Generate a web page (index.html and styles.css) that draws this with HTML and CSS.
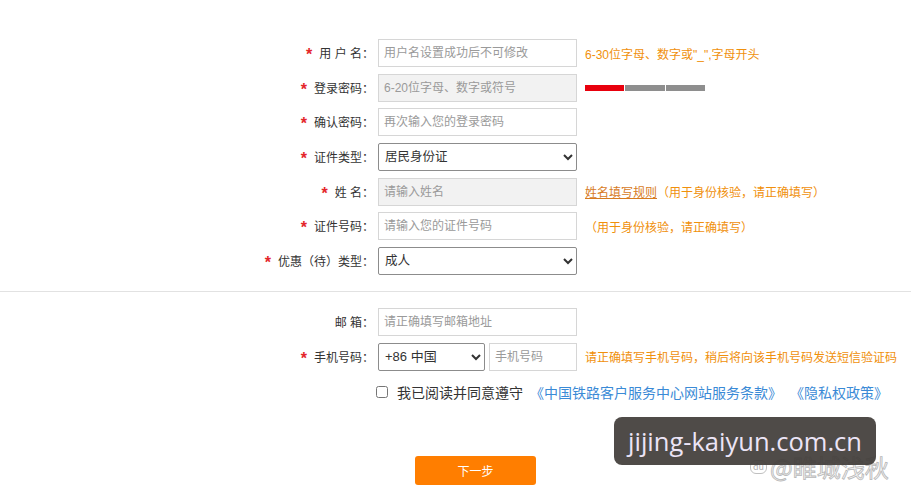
FILE: index.html
```html
<!DOCTYPE html>
<html lang="zh-CN">
<head>
<meta charset="utf-8">
<title>注册</title>
<link rel="stylesheet" href="styles.css">
</head>
<body>
<div class="page">
  <form class="reg">
    <div class="group">
      <div class="row">
        <label class="label"><em class="req">*</em>用 户 名：</label>
        <input class="field" type="text" placeholder="用户名设置成功后不可修改">
        <span class="hint">6-30位字母、数字或"_",字母开头</span>
      </div>
      <div class="row">
        <label class="label"><em class="req">*</em>登录密码：</label>
        <input class="field filled" type="text" placeholder="6-20位字母、数字或符号">
        <span class="strength"><i class="weak"></i><i></i><i></i></span>
      </div>
      <div class="row">
        <label class="label"><em class="req">*</em>确认密码：</label>
        <input class="field" type="text" placeholder="再次输入您的登录密码">
      </div>
      <div class="row">
        <label class="label"><em class="req">*</em>证件类型：</label>
        <select class="field sel"><option>居民身份证</option></select>
      </div>
      <div class="row">
        <label class="label"><em class="req">*</em>姓 名：</label>
        <input class="field filled" type="text" placeholder="请输入姓名">
        <span class="hint"><a class="rule">姓名填写规则</a>（用于身份核验，请正确填写）</span>
      </div>
      <div class="row">
        <label class="label"><em class="req">*</em>证件号码：</label>
        <input class="field" type="text" placeholder="请输入您的证件号码">
        <span class="hint">（用于身份核验，请正确填写）</span>
      </div>
      <div class="row">
        <label class="label"><em class="req">*</em>优惠（待）类型：</label>
        <select class="field sel"><option>成人</option></select>
      </div>
    </div>
    <div class="sep"></div>
    <div class="group">
      <div class="row">
        <label class="label">邮 箱：</label>
        <input class="field" type="text" placeholder="请正确填写邮箱地址">
      </div>
      <div class="row">
        <label class="label"><em class="req">*</em>手机号码：</label>
        <div class="phone">
          <select class="sel code"><option>+86 中国</option></select>
          <input class="num" type="text" placeholder="手机号码">
        </div>
        <span class="hint">请正确填写手机号码，稍后将向该手机号码发送短信验证码</span>
      </div>
    </div>
    <div class="agree">
      <input class="chk" type="checkbox">
      <span class="agree-text">我已阅读并同意遵守</span>
      <a class="link">《中国铁路客户服务中心网站服务条款》</a>
      <a class="link">《隐私权政策》</a>
    </div>
    <div class="actions">
      <button class="next" type="button">下一步</button>
    </div>
  </form>
  <div class="wm-sign"><span class="du">du</span>@睢城浅秋</div>
  <div class="wm-box">jijing-kaiyun.com.cn</div>
</div>
</body>
</html>
```
FILE: styles.css
```css
html, body {
  margin: 0;
  padding: 0;
  background: #fff;
}
body {
  font-family: "Liberation Sans", "Noto Sans CJK SC", sans-serif;
  font-size: 12px;
  color: #333;
  width: 911px;
  height: 500px;
  overflow: hidden;
}
.page {
  position: relative;
  padding-top: 39px;
  height: 461px;
}
.group {
  display: flex;
  flex-direction: column;
  gap: 6.67px;
}
.row {
  display: flex;
  align-items: center;
  height: 28px;
}
.label {
  width: 374px;
  flex: none;
  text-align: right;
  font-size: 12px;
  color: #333;
  margin-right: 4px;
  white-space: pre;
}
.req {
  font-style: normal;
  color: #e4262a;
  font-size: 16px;
  font-weight: bold;
  margin-right: 7px;
  position: relative;
  top: 2px;
}
.field {
  box-sizing: border-box;
  width: 199px;
  height: 28px;
  flex: none;
  border: 1px solid #d6d6d6;
  padding: 0 5px;
  font-family: inherit;
  font-size: 12px;
  color: #333;
  background: #fff;
  outline: none;
  margin: 0;
}
.field.filled {
  background: #f2f2f2;
}
.field::placeholder, .num::placeholder {
  color: #9a9a9a;
}
.sel {
  border: 1px solid #8c8c8c;
  border-radius: 2px;
  padding: 0 2px;
  font-family: inherit;
  font-size: 12.5px;
  color: #333;
  background: #fff;
}
.hint {
  margin-left: 8px;
  color: #f0900c;
  font-size: 12px;
  white-space: nowrap;
}
.rule {
  color: #d77b1e;
  text-decoration: underline;
}
.strength {
  display: flex;
  gap: 1px;
  margin-left: 8px;
  height: 6px;
}
.strength i {
  width: 39.3px;
  height: 6px;
  background: #8e8e8e;
}
.strength i.weak {
  background: #e8000d;
}
.sep {
  height: 1px;
  background: #e2e2e2;
  margin: 16px 0 16px;
}
.phone {
  display: flex;
  gap: 4px;
  width: 199px;
  flex: none;
}
.code {
  box-sizing: border-box;
  width: 107px;
  height: 28px;
  margin: 0;
  font-size: 13px;
}
.num {
  box-sizing: border-box;
  width: 88px;
  height: 28px;
  border: 1px solid #d6d6d6;
  padding: 0 5px;
  font-family: inherit;
  font-size: 12px;
  outline: none;
  margin: 0;
}
.agree {
  display: flex;
  align-items: center;
  height: 20px;
  margin-top: 11px;
  padding-left: 372px;
  font-size: 14px;
  white-space: nowrap;
}
.chk {
  width: 12px;
  height: 12px;
  margin: 0 9px 0 4px;
}
.agree-text {
  color: #333;
  margin-right: 7px;
}
.link {
  color: #3a8ad6;
  margin-right: 8px;
}
.actions {
  margin-top: 54px;
  padding-left: 415px;
}
.next {
  width: 121px;
  height: 29px;
  border: none;
  border-radius: 3px;
  background: #ff7e00;
  color: #fff;
  font-family: inherit;
  font-size: 12px;
  padding: 0;
}
.wm-box {
  position: absolute;
  left: 614px;
  top: 417px;
  width: 262px;
  height: 48px;
  box-sizing: border-box;
  border-radius: 8px;
  background: rgba(66, 61, 58, 0.93);
  color: #ece4f6;
  font-family: "Open Sans", "DejaVu Sans", sans-serif;
  font-size: 25.5px;
  line-height: 48px;
  text-align: center;
}
.wm-sign {
  position: absolute;
  left: 750px;
  top: 449px;
  font-family: "Noto Sans CJK SC", sans-serif;
  font-size: 24px;
  color: #f4f4f4;
  -webkit-text-stroke: 0.8px #b8b8b8;
  white-space: nowrap;
  display: flex;
  align-items: center;
}
.du {
  display: inline-block;
  font-size: 9px;
  -webkit-text-stroke: 0;
  color: #b0b0b0;
  border: 1px solid #c0c0c0;
  border-radius: 6px;
  padding: 0 2px;
  margin-right: 3px;
  line-height: 12px;
}
```
